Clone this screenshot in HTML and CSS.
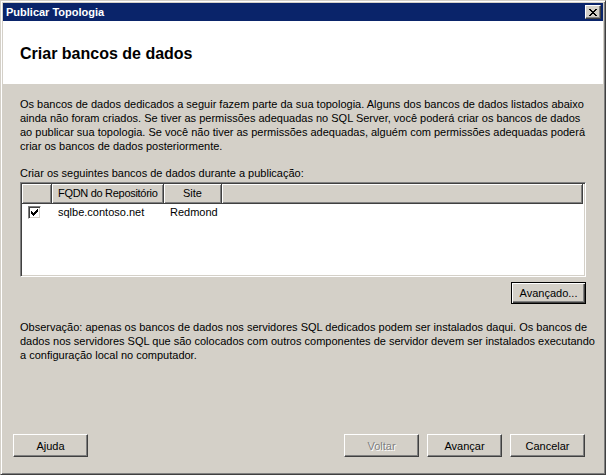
FILE: index.html
```html
<!DOCTYPE html>
<html lang="pt">
<head>
<meta charset="utf-8">
<title>Publicar Topologia</title>
<link rel="stylesheet" href="styles.css">
</head>
<body>
<div class="window">
  <div class="titlebar">
    <span class="title">Publicar Topologia</span>
    <span class="close">
      <svg width="8" height="7" viewBox="0 0 8 7" shape-rendering="crispEdges"><path d="M0 0h2v1h-2z M6 0h2v1h-2z M1 1h2v1h-2z M5 1h2v1h-2z M2 2h4v1h-4z M3 3h2v1h-2z M2 4h4v1h-4z M1 5h2v1h-2z M5 5h2v1h-2z M0 6h2v1h-2z M6 6h2v1h-2z" fill="#000"/></svg>
    </span>
  </div>
  <div class="header">
    <h1>Criar bancos de dados</h1>
  </div>
  <div class="content">
    <p class="intro">Os bancos de dados dedicados a seguir fazem parte da sua topologia. Alguns dos bancos de dados listados abaixo<br>ainda não foram criados. Se tiver as permissões adequadas no SQL Server, você poderá criar os bancos de dados<br>ao publicar sua topologia. Se você não tiver as permissões adequadas, alguém com permissões adequadas poderá<br>criar os bancos de dados posteriormente.</p>
    <p class="label">Criar os seguintes bancos de dados durante a publicação:</p>
    <div class="listview">
      <div class="lv-head">
        <div class="lv-col c0"></div>
        <div class="lv-col c1">FQDN do Repositório</div>
        <div class="lv-col c2">Site</div>
        <div class="lv-col c3"></div>
      </div>
      <div class="lv-row">
        <div class="lv-cell c0">
          <span class="check">
            <svg width="7" height="7" viewBox="0 0 7 7" shape-rendering="crispEdges"><path d="M0 2h1v3h-1z M1 3h1v3h-1z M2 4h1v3h-1z M3 3h1v3h-1z M4 2h1v3h-1z M5 1h1v3h-1z M6 0h1v3h-1z" fill="#000"/></svg>
          </span>
        </div>
        <div class="lv-cell c1">sqlbe.contoso.net</div>
        <div class="lv-cell c2">Redmond</div>
      </div>
    </div>
    <div class="adv-row">
      <button class="btn btn-default">Avançado...</button>
    </div>
    <p class="note">Observação: apenas os bancos de dados nos servidores SQL dedicados podem ser instalados daqui. Os bancos de<br>dados nos servidores SQL que são colocados com outros componentes de servidor devem ser instalados executando<br>a configuração local no computador.</p>
  </div>
  <div class="footer">
    <button class="btn">Ajuda</button>
    <span class="spacer"></span>
    <button class="btn" disabled>Voltar</button>
    <button class="btn">Avançar</button>
    <button class="btn">Cancelar</button>
  </div>
</div>
</body>
</html>
```
FILE: styles.css
```css
* { box-sizing: border-box; }

html, body {
  margin: 0;
  padding: 0;
}

body {
  width: 606px;
  height: 475px;
  overflow: hidden;
  font-family: "Liberation Sans", Arial, sans-serif;
  font-size: 11px;
  color: #000;
  background: #d4d0c8;
}

.window {
  width: 606px;
  height: 475px;
  display: flex;
  flex-direction: column;
  background: #d4d0c8;
  border: 1px solid;
  border-color: #d4d0c8 #404040 #404040 #d4d0c8;
  box-shadow: inset 1px 1px #ffffff, inset -1px -1px #808080;
  padding: 2px;
}

.titlebar {
  height: 18px;
  flex: none;
  display: flex;
  align-items: center;
  background: #0a246a;
  color: #fff;
  font-weight: bold;
  padding: 0 2px 0 2px;
}

.title {
  line-height: 14px;
  padding-left: 1px;
}

.close {
  margin-left: auto;
  width: 16px;
  height: 14px;
  display: flex;
  align-items: center;
  justify-content: center;
  padding-right: 1px;
  background: #d4d0c8;
  border: 1px solid;
  border-color: #ffffff #404040 #404040 #ffffff;
  box-shadow: inset -1px -1px #808080;
}

.close svg { display: block; }

.header {
  height: 63px;
  flex: none;
  background: #fff;
  display: flex;
  align-items: center;
  padding-left: 17px;
  padding-top: 2px;
}

.header h1 {
  margin: 0;
  font-size: 16px;
  font-weight: bold;
  line-height: 20px;
}

.content {
  flex: 1;
  padding: 0 17px 0 17px;
}

.intro,
.label,
.note {
  margin: 0;
  line-height: 14px;
  white-space: nowrap;
}

.intro { margin-top: 13px; }
.label { margin-top: 13px; }
.note { margin-top: 16px; }

.listview {
  margin-top: 2px;
  height: 95px;
  background: #fff;
  border: 1px solid;
  border-color: #808080 #ffffff #ffffff #808080;
  box-shadow: inset 1px 1px #404040, inset -1px -1px #d4d0c8;
  padding: 1px 2px 2px 1px;
}

.lv-head {
  display: flex;
  height: 20px;
}

.lv-col {
  background: #d4d0c8;
  border-right: 1px solid #404040;
  border-bottom: 1px solid #404040;
  box-shadow: inset 1px 1px #ffffff, inset -1px -1px #808080;
  line-height: 18px;
  padding-left: 6px;
  white-space: nowrap;
  overflow: hidden;
}

.c0 { width: 30px; flex: none; }
.c1 { width: 112px; flex: none; }
.c2 { width: 58px; flex: none; }
.c3 { flex: 1; }

.lv-head .c1 {
  letter-spacing: -0.3px;
}

.lv-head .c2 {
  padding-left: 0;
  text-align: center;
}

.lv-row {
  display: flex;
  height: 16px;
  align-items: center;
}

.lv-cell {
  padding-left: 6px;
  white-space: nowrap;
}

.lv-cell.c0 {
  display: flex;
  align-items: center;
}

.check {
  width: 13px;
  height: 13px;
  display: flex;
  align-items: center;
  justify-content: center;
  background: #fff;
  border: 1px solid;
  border-color: #808080 #ffffff #ffffff #808080;
  box-shadow: inset 1px 1px #404040, inset -1px -1px #d4d0c8;
}

.check svg { display: block; }

.adv-row {
  display: flex;
  justify-content: flex-end;
  margin-top: 5px;
}

.btn {
  width: 75px;
  height: 23px;
  padding: 0;
  font-family: inherit;
  font-size: 11px;
  color: #000;
  background: #d4d0c8;
  border: 1px solid;
  border-color: #ffffff #404040 #404040 #ffffff;
  box-shadow: inset -1px -1px #808080;
  border-radius: 0;
}

.btn-default {
  height: 22px;
  border-color: #000;
  box-shadow: inset 1px 1px #ffffff, inset -1px -1px #404040, inset -2px -2px #808080;
}

.btn:disabled {
  color: #808080;
  text-shadow: 1px 1px #ffffff;
}

.footer {
  flex: none;
  display: flex;
  gap: 8px;
  padding: 0 18px 15px 10px;
}

.spacer { flex: 1; }
```
